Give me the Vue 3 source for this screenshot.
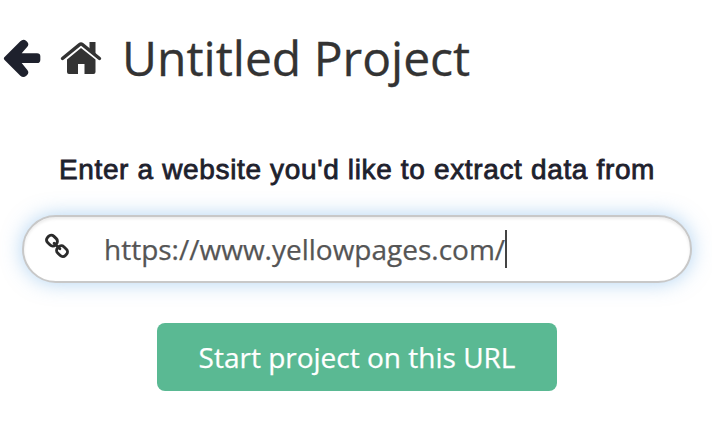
<template>
  <div class="project-start">
    <header class="project-header">
      <button class="back-btn" aria-label="Back">
        <svg width="38" height="40" viewBox="0 0 114 120">
          <path d="M4 55 L52 7 Q61 -2 70 6 L73 9 Q79 16 73 23 L56 43 H102 Q112 43 112 52 V62 Q112 72 102 72 H56 L73 93 Q79 100 73 107 L70 110 Q61 118 52 110 L4 62 Q1 58 4 55 Z" />
        </svg>
      </button>
      <svg class="home-icon" width="42" height="34" viewBox="0 0 42 34">
        <path d="M29.5 1 H35.5 V14 L29.5 9 Z" />
        <path d="M7 18.5 L21 7 L35.5 18.5 V31 Q35.5 33 33.5 33 H24.5 V23 H18 V33 H9 Q7 33 7 31 Z" />
        <path class="roof" d="M2.5 17.5 L19.5 3.6 Q21 2.5 22.5 3.6 L39.5 17.5" />
      </svg>
      <h1 class="project-name">{{ projectName }}</h1>
    </header>

    <main class="start-form">
      <label class="prompt" for="url">Enter a website you'd like to extract data from</label>
      <div class="url-box">
        <svg class="link-icon" width="24" height="24" viewBox="0 0 24 24">
          <g transform="rotate(44 12 12)">
            <rect x="-0.8" y="7.2" width="10.8" height="8.8" rx="3.6" />
            <rect x="13.8" y="7.8" width="10.8" height="8.8" rx="3.6" />
            <path d="M8 12 H16" />
          </g>
        </svg>
        <span id="url" class="url-text">{{ url }}</span>
        <span class="caret"></span>
      </div>
      <button class="start-btn">Start project on this URL</button>
    </main>
  </div>
</template>

<script setup>
import { ref } from 'vue'

const projectName = ref('Untitled Project')
const url = ref('https://www.yellowpages.com/')
</script>

<style>
body {
  background: #fff;
}
</style>

<style scoped>
.project-start {
  width: 712px;
  height: 448px;
  box-sizing: border-box;
  padding-top: 24px;
  overflow: hidden;
  font-family: "Open Sans", "Noto Sans", sans-serif;
}

.project-header {
  display: flex;
  align-items: center;
  height: 70px;
  padding-left: 3px;
}

.back-btn {
  display: flex;
  padding: 0;
  border: 0;
  background: none;
  fill: #1e212d;
}

.home-icon {
  margin: -3px 0 0 19px;
  fill: #333;
}

.roof {
  fill: none;
  stroke: #333;
  stroke-width: 3.4;
  stroke-linecap: round;
}

.project-name {
  margin: -2px 0 0 20px;
  color: #333;
  font-size: 48px;
  font-weight: 400;
  line-height: 70px;
  white-space: nowrap;
  -webkit-text-stroke: 0.3px #333;
}

.start-form {
  display: flex;
  flex-direction: column;
  align-items: center;
  padding: 60px 20px 0 22px;
}

.prompt {
  color: #1e212d;
  font-family: "Liberation Sans", Arial, sans-serif;
  font-size: 28px;
  line-height: 32px;
  letter-spacing: 0.65px;
  white-space: nowrap;
  -webkit-text-stroke: 0.8px #1e212d;
}

.url-box {
  display: flex;
  align-items: center;
  align-self: stretch;
  height: 68px;
  box-sizing: border-box;
  margin-top: 29px;
  padding-left: 21px;
  border: 2px solid #c8c8c8;
  border-radius: 34px;
  background: #fff;
  box-shadow: inset 0 2px 3px rgba(0, 0, 0, 0.08), 0 0 20px rgba(102, 170, 230, 0.5);
}

.link-icon {
  margin-top: -6px;
  fill: none;
  stroke: #2b2b2b;
  stroke-width: 2.9;
  stroke-linecap: round;
  overflow: visible;
}

.url-text {
  margin-left: 35px;
  color: #555;
  font-size: 28px;
  line-height: 38px;
  white-space: nowrap;
  -webkit-text-stroke: 0.25px #555;
}

.caret {
  width: 2px;
  height: 38px;
  background: #444;
}

.start-btn {
  width: 400px;
  height: 68px;
  margin-top: 40px;
  padding: 0 0 1px;
  border: 0;
  border-radius: 8px;
  background: #5ab993;
  color: #fff;
  font-family: inherit;
  font-size: 28px;
  white-space: nowrap;
  -webkit-text-stroke: 0.25px #fff;
}
</style>
